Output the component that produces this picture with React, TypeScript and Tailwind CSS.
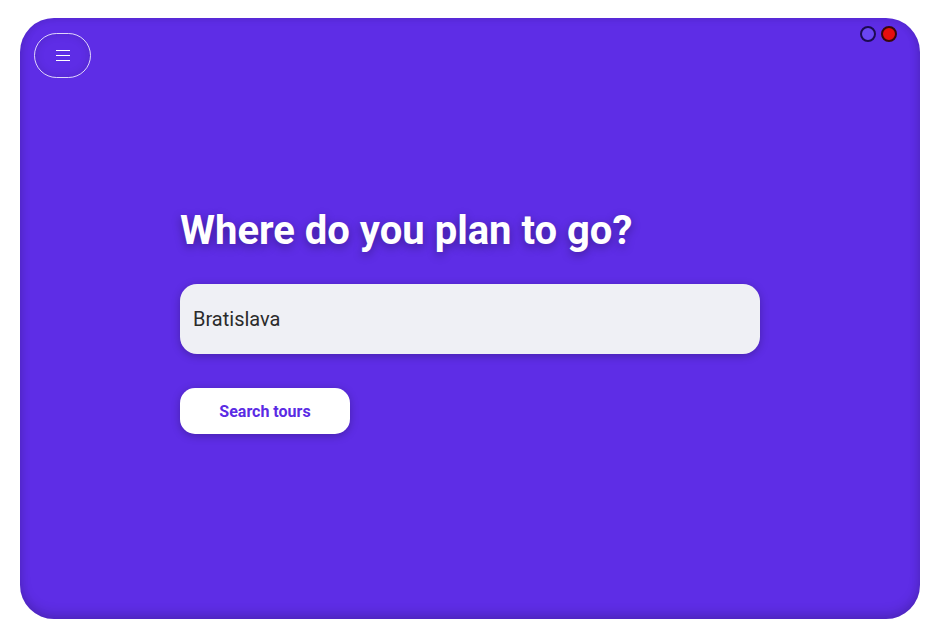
import React, { useState } from "react";

const App: React.FC = () => {
    const [destination, setDestination] = useState<string>("Bratislava");

    return (
        <main className="min-h-screen bg-white pt-[18px] px-[20px] font-['Roboto',_'Liberation_Sans',_sans-serif]">
            <section className="relative h-[601px] w-[900px] rounded-[34px] bg-[#5e2de6] shadow-[inset_0_-6px_12px_rgba(0,0,0,0.12),inset_0_0_8px_rgba(0,0,0,0.12)] flex flex-col">
                {/* top bar */}
                <div className="flex items-start justify-between pl-[14px] pr-[23px] pt-[8px]">
                    <button className="mt-[7px] w-[57px] h-[45px] rounded-full border border-white/80 flex flex-col items-center justify-center gap-[4px] shadow-[inset_0_0_10px_rgba(0,0,0,0.12)]">
                        <span className="block w-[14px] h-px bg-white" />
                        <span className="block w-[14px] h-px bg-white" />
                        <span className="block w-[14px] h-px bg-white" />
                    </button>
                    <div className="flex gap-[5px]">
                        <span className="block w-[16px] h-[16px] rounded-full bg-[#6a45f2] border-2 border-[#1c0b52]" />
                        <span className="block w-[16px] h-[16px] rounded-full bg-[#e50e0e] border-2 border-[#3a0808]" />
                    </div>
                </div>

                {/* search form */}
                <div className="ml-[160px] w-[580px] mt-[129px]">
                    <h1 className="text-[40px] leading-[48px] font-bold text-white [text-shadow:0_3px_10px_rgba(0,0,0,0.35)]">
                        Where do you plan to go?
                    </h1>
                    <input
                        value={destination}
                        onChange={(e) => setDestination(e.target.value)}
                        className="mt-[29px] block w-full h-[70px] rounded-[17px] bg-[#eff0f5] pl-[13px] text-[20px] text-[#2b2b2b] outline-none shadow-[0_2px_8px_rgba(0,0,0,0.25)]"
                    />
                    <button className="mt-[34px] w-[170px] h-[46px] pt-[2px] rounded-[15px] bg-white text-[16px] font-bold text-[#5b2be4] shadow-[0_2px_8px_rgba(0,0,0,0.25)]">
                        Search tours
                    </button>
                </div>
            </section>
        </main>
    );
};

export default App;
